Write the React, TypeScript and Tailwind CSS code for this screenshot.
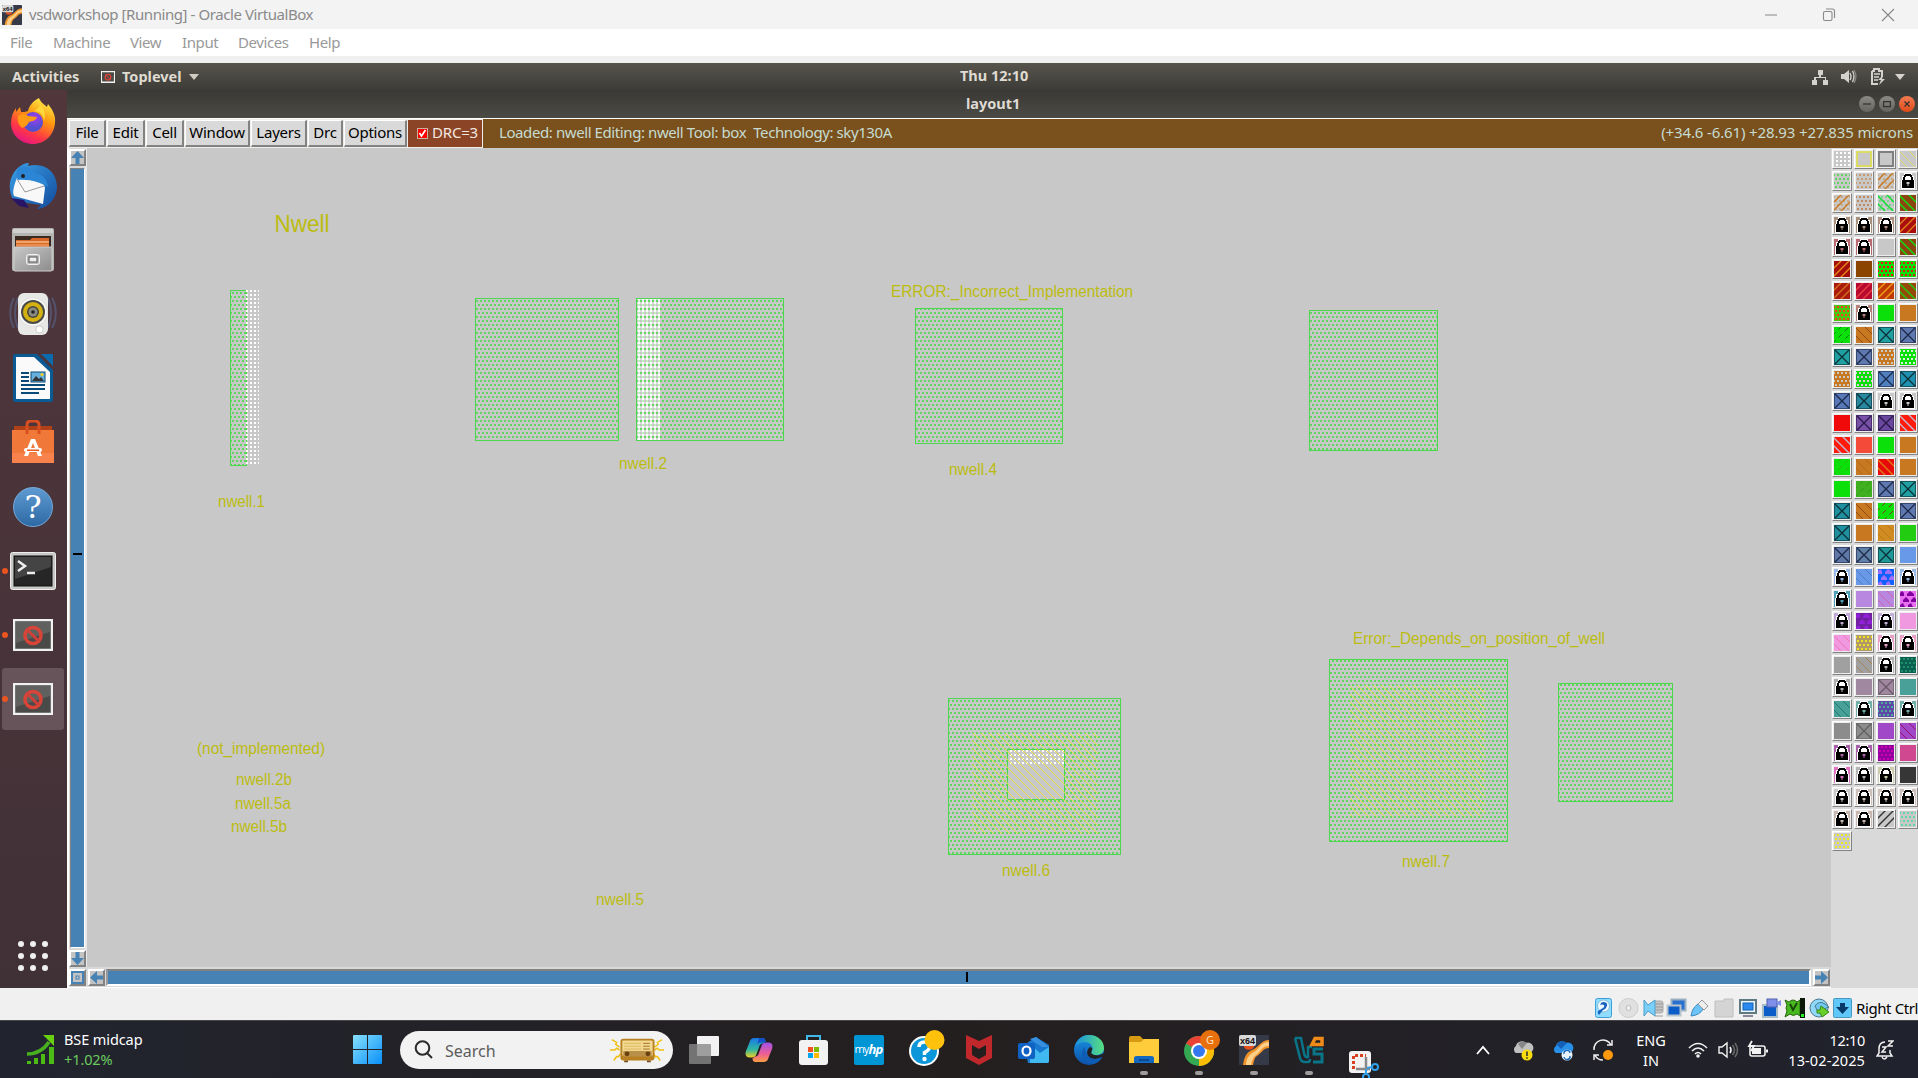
import type { ReactNode } from "react";

/* ---------- layer palette ---------- */

type Tile = [kind: string, bg: string, fg?: string];

const G = "#c8c8c8";
const GR = "#0be00b";
const OR = "#c87820";
const TE = "#20a0a0";
const BL = "#6078b0";

const TILES: Tile[] = [
  ["grid", G, "#ffffff"], ["box", G, "#dcdc64"], ["box", G, "#808080"], ["downthin", G, "#e4e060"],
  ["dots", G, "#5fd75f"], ["dots", G, "#c89a70"], ["updots", G, OR], ["lock", G],
  ["updots", G, OR], ["dots", G, "#c08a60"], ["downdots", G, "#0be030"], ["down", "#8b4510", "#10e010"],
  ["lock", "#a8907a"], ["lock", "#a8907a"], ["lock", "#b09080"], ["up", "#aa0d0d", "#e08018"],
  ["lock", "#b86a70"], ["lock", "#b86a70"], ["solid", G], ["down", "#8b4510", "#10e010"],
  ["up", "#a50d0d", "#e08a18"], ["solid", "#8b4500"], ["dots", GR, "#f01010"], ["dots", GR, "#d82010"],
  ["up", "#aa1a0d", "#d07020"], ["up", "#b80a30", "#e84040"], ["up", "#c03a08", "#f0a018"], ["down", "#964a0a", "#20c810"],
  ["dots", "#48c810", "#ff3820"], ["lock", "#b88078"], ["solid", GR], ["solid", OR],
  ["upthin", GR, "#0a7a10"], ["downthin", OR, "#8a4510"], ["cross", TE, "#0c3038"], ["cross", BL, "#1c2848"],
  ["cross", TE, "#0c3038"], ["cross", BL, "#1c2848"], ["dots", OR, G], ["dots", GR, "#d8ecd8"],
  ["dots", OR, G], ["dots", GR, "#e0c8d8"], ["cross", "#5080c0", "#1c2848"], ["cross", "#2090b0", "#0c3038"],
  ["cross", "#5878b8", "#1c2848"], ["cross", "#2888a0", "#0c3038"], ["lock", G], ["lock", G],
  ["solid", "#f00a0a"], ["cross", "#7850a8", "#281848"], ["cross", "#6a48a0", "#281848"], ["down", "#ff1a0a", "#c0b8d0"],
  ["down", "#ff1a0a", "#c0b8d0"], ["solid", "#f44a3a"], ["solid", GR], ["solid", OR],
  ["upthin", GR, "#30b010"], ["downthin", OR, "#b06818"], ["down", "#e80a0a", "#e07818"], ["solid", OR],
  ["solid", GR], ["upthin", "#40b020", "#309a18"], ["cross", BL, "#1c2848"], ["cross", TE, "#0c3038"],
  ["cross", "#2090a0", "#0c3038"], ["downthin", OR, "#8a4510"], ["upthin", GR, "#803010"], ["cross", BL, "#1c2848"],
  ["cross", "#2090a0", "#0c3038"], ["solid", OR], ["downthin", "#d08c20", "#b87818"], ["solid", "#22cc10"],
  ["cross", "#6078a8", "#1c2848"], ["cross", "#6080a8", "#1c2848"], ["cross", "#209898", "#0c3038"], ["solid", "#6898e8"],
  ["lock", "#98b8e8"], ["downthin", "#6898e8", "#5078b8"], ["tri", "#1060ff", "#a070f8"], ["lock", "#98b8e8"],
  ["lock", "#50a0b8"], ["solid", "#b888e0"], ["downthin", "#b888e0", "#d060a8"], ["tri", "#e870f0", "#8000a0"],
  ["lock", "#c0a8d8"], ["tri", "#7020a0", "#9020d8"], ["lock", "#c0b0d8"], ["solid", "#f098e0"],
  ["downthin", "#f098e0", "#f070b0"], ["dots", "#b09868", "#ece420"], ["lock", "#e8a0c8"], ["lock", "#e8a0c8"],
  ["solid", "#a0a0a0"], ["downthin", "#a0a0a0", "#a88050"], ["lock", "#b0b0b0"], ["dots", "#0a6050", "#209068"],
  ["lock", "#b0b0b0"], ["solid", "#a088a0"], ["cross", "#a088a0", "#685868"], ["solid", "#48a098"],
  ["downthin", "#48a098", "#187868"], ["lock", "#70b0a8"], ["dots", "#6048a8", "#48b098"], ["lock", "#70b0a8"],
  ["solid", "#8c8c8c"], ["cross", "#8c8c8c", "#606060"], ["solid", "#a048c8"], ["downthin", "#a048c8", "#980868"],
  ["lock", "#a860a8"], ["lock", "#a860a8"], ["dots", "#9000a0", "#d000b0"], ["solid", "#d04890"],
  ["lock", "#e070c0"], ["lock", "#b4b4b4"], ["lock", "#ccccac"], ["solid", "#363636"],
  ["lock", G], ["lock", "#ccc0b8"], ["lock", "#ccc0b8"], ["lock", "#ccc0b8"],
  ["lock", "#c8b8b0"], ["lock", "#c8b8b0"], ["up", G, "#303030"], ["dots", G, "#60d8a8"],
  ["dots", G, "#ecec20"],
];

const staggered = () => {
  let d = "";
  for (let r = 0; r < 4; r++)
    for (let c = 0; c < 5; c++) d += `M${c * 4 + (r % 2 ? 2 : 0) - 1} ${r * 4 + 1}h2v2h-2z`;
  return d;
};
const regular = () => {
  let d = "";
  for (let r = 0; r < 4; r++) for (let c = 0; c < 4; c++) d += `M${c * 4 + 2} ${r * 4 + 1}h2v2h-2z`;
  return d;
};
const DOTS = staggered();
const GRID = regular();
const UP = "M-2 9L9 -2M-2 17L17 -2M5 18L18 5";
const DOWN = "M7 -2L18 9M-2 -1L17 18M-2 7L9 18";

function TileArt({ kind, bg, fg }: { kind: string; bg: string; fg?: string }) {
  return (
    <svg width="16" height="16" viewBox="0 0 16 16" className="block">
      <rect width="16" height="16" fill={bg} />
      {(kind === "dots" || kind === "updots" || kind === "downdots") && (
        <path d={DOTS} fill={fg} opacity={kind === "dots" ? 1 : 0.4} />
      )}
      {kind === "grid" && <path d={GRID} fill={fg} />}
      {kind === "box" && <rect x="1" y="1" width="14" height="14" fill="none" stroke={fg} strokeWidth="2" />}
      {(kind === "up" || kind === "updots") && <path d={UP} stroke={fg} strokeWidth="1.4" />}
      {kind === "upthin" && <path d={UP} stroke={fg} strokeWidth="1" strokeDasharray="5 4" />}
      {(kind === "down" || kind === "downdots") && <path d={DOWN} stroke={fg} strokeWidth="1.4" />}
      {kind === "downthin" && <path d={DOWN} stroke={fg} strokeWidth=".9" />}
      {kind === "cross" && (
        <>
          <rect x=".5" y=".5" width="15" height="15" fill="none" stroke={fg} strokeOpacity=".6" />
          <path d="M1 1L15 15M15 1L1 15" stroke={fg} strokeWidth="1.3" />
        </>
      )}
      {kind === "tri" && (
        <path d="M0 2l2-2 2 2v3h-4zM7 3l3-3 4 3v2h-7zM3 9l3-3 3 3v2h-6zM11 9l3-3 2 2v3h-5zM0 14l3-2 2 4h-5zM8 14l3-2 2 4h-5z" fill={fg} />
      )}
      {kind === "lock" && (
        <>
          <path d="M4 0h8v3h2v4h1v9h-14v-9h1v-4h2z" fill="#fff" />
          <path d="M3 8V4h1V2h1V1h6v1h1v2h1v4h-2V4h-1V3H6v1H5v4z" fill="#000" />
          <rect x="2" y="7" width="12" height="8" fill="#000" />
          <path d="M6.500 9h3v2h-1v2h-1v-2h-1z" fill={bg} />
        </>
      )}
    </svg>
  );
}

function Palette() {
  return (
    <div className="w-[87px] shrink-0 overflow-hidden bg-[#d9d9d9] pl-px pt-px">
      <div className="grid w-[88px] grid-cols-4 gap-y-[2px]">
        {TILES.map(([kind, bg, fg], i) => (
          <div
            key={i}
            className="h-5 w-5 border border-b-[#828282] border-l-white border-r-[#828282] border-t-white bg-[#ececec] p-px"
          >
            <TileArt kind={kind} bg={bg} fg={fg} />
          </div>
        ))}
      </div>
    </div>
  );
}

/* ---------- layout drawing ---------- */

const WELLS: [number, number, number, number][] = [
  [230, 290, 247, 466],
  [475, 298, 619, 441],
  [636, 298, 784, 441],
  [915, 308, 1063, 444],
  [1309, 310, 1438, 451],
  [948, 698, 1121, 855],
  [1329, 659, 1508, 842],
  [1558, 683, 1673, 802],
];

const LABELS: [string, number, number, number][] = [
  ["nwell.1", 219, 265, 507],
  ["nwell.2", 620, 667, 469],
  ["nwell.4", 950, 997, 475],
  ["nwell.6", 1003, 1050, 876],
  ["nwell.7", 1403, 1450, 867],
  ["nwell.5", 597, 644, 905],
  ["nwell.2b", 237, 292, 785],
  ["nwell.5a", 236, 291, 809],
  ["nwell.5b", 232, 287, 832],
  ["(not_implemented)", 198, 325, 754],
  ["ERROR:_Incorrect_Implementation", 892, 1133, 297],
  ["Error:_Depends_on_position_of_well", 1354, 1605, 644],
];

function Canvas() {
  return (
    <svg width="1744" height="819" viewBox="87 148 1744 819" className="block bg-[#c8c8c8]">
      <defs>
        <pattern id="well" width="4" height="8" patternUnits="userSpaceOnUse">
          <path d="M2 0h2v2h-2zM0 4h2v2h-2z" fill="#5fd75f" />
        </pattern>
        <pattern id="err" width="4" height="4" patternUnits="userSpaceOnUse">
          <path d="M2 2h2v2h-2z" fill="#fff" />
        </pattern>
        <pattern id="dense" width="4" height="4" patternUnits="userSpaceOnUse">
          <path d="M2 2h2v2h-2z" fill="#fff" />
          <path d="M2 0h2v2h-2z" fill="#fff" opacity=".6" />
          <path d="M0 2h2v2h-2z" fill="#fff" opacity=".3" />
        </pattern>
        <pattern id="diag" width="8" height="8" patternUnits="userSpaceOnUse">
          <path d="M-1 -1L9 9" stroke="#e6df48" strokeWidth="1" />
        </pattern>
      </defs>
      <g shapeRendering="crispEdges">
        {WELLS.map(([x1, y1, x2, y2]) => (
          <rect
            key={`${x1}`}
            x={x1 + 0.5}
            y={y1 + 0.5}
            width={x2 - x1 - 1}
            height={y2 - y1 - 1}
            fill="url(#well)"
            stroke="#4cd84c"
          />
        ))}
        <rect x="246" y="290" width="13" height="175" fill="url(#err)" />
        <rect x="637" y="299" width="23" height="141" fill="url(#dense)" />
        <rect x="1007.5" y="749.5" width="57" height="50" fill="#c8c8c8" stroke="#4cd84c" />
        <rect x="1010" y="750" width="54" height="14" fill="url(#err)" />
      </g>
      <rect x="972" y="733" width="126" height="101" fill="url(#diag)" />
      <rect x="1350" y="685" width="135" height="132" fill="url(#diag)" />
      <g fill="#bcbc10" fontFamily="'Liberation Sans', Arial, sans-serif" fontSize="16">
        <text x="274.500" y="232" fontSize="23.5" textLength="55" lengthAdjust="spacingAndGlyphs">
          Nwell
        </text>
        {LABELS.map(([t, x1, x2, y]) => (
          <text key={t} x={x1 - 1} y={y} textLength={x2 - x1 + 1} lengthAdjust="spacingAndGlyphs">
            {t}
          </text>
        ))}
      </g>
    </svg>
  );
}

/* ---------- scroll bars ---------- */

const ROT: Record<string, string> = { up: "", down: "rotate-180", left: "-rotate-90", right: "rotate-90" };

function ArrowButton({ dir }: { dir: string }) {
  return (
    <div className="h-[17px] w-[17px] shrink-0 border-2 border-b-[#828282] border-l-white border-r-[#828282] border-t-white bg-[#c3c3c3]">
      {dir === "zoom" ? (
        <svg width="13" height="13" viewBox="0 0 13 13" className="block">
          <path d="M1 1h11v11h-11z" fill="none" stroke="#4682b4" strokeWidth="2" />
          <rect x="5" y="5" width="3" height="3" fill="none" stroke="#4682b4" />
        </svg>
      ) : (
        <svg width="13" height="13" viewBox="0 0 13 13" className={`block ${ROT[dir]}`}>
          <path d="M6.500 0L13 7H8.500V13H4.500V7H0z" fill="#4682b4" />
        </svg>
      )}
    </div>
  );
}

/* ---------- dock ---------- */

function Firefox({ s = 46 }: { s?: number }) {
  return (
    <svg width={s} height={s} viewBox="0 0 46 46">
      <defs>
        <linearGradient id="ff" x1=".8" y1="0" x2=".3" y2="1">
          <stop offset="0" stopColor="#fff44f" />
          <stop offset=".4" stopColor="#ff980e" />
          <stop offset=".75" stopColor="#ff3647" />
          <stop offset="1" stopColor="#e31587" />
        </linearGradient>
        <radialGradient id="ffp" cx=".6" cy=".3">
          <stop offset="0" stopColor="#a53cf0" />
          <stop offset="1" stopColor="#5050d0" />
        </radialGradient>
      </defs>
      <path d="M29 0c2 5 5 6 8 9l1-3c4 5 8 11 7 19-1 12-10 21-22 21S1 37 1 25c0-6 2-11 5-15v4l4-5 1 5c2 0 5 0 7-1 1-5 5-10 11-13z" fill="url(#ff)" />
      <circle cx="23" cy="24" r="10" fill="url(#ffp)" />
      <path d="M8 18c4-3 8-2 10 0l9 1c-1 4-5 4-8 5-1 3-4 5-7 6-3-3-5-7-4-12z" fill="#ff9a16" />
      <path d="M24 13c6 0 10 4 10 10 2-6 1-12-4-16-1 3-3 4-6 6z" fill="#ffd83c" />
    </svg>
  );
}

function Thunderbird() {
  return (
    <svg width="48" height="48" viewBox="0 0 48 48">
      <defs>
        <linearGradient id="tb" x1="0" y1="0" x2="1" y2="1">
          <stop offset="0" stopColor="#3aa0e8" />
          <stop offset="1" stopColor="#124a9c" />
        </linearGradient>
      </defs>
      <path d="M10 5c5-4 8-4 10-4l-1 3c16-4 28 5 29 20 0 12-8 22-20 23l4-4-14-2L4 38C-1 28-1 14 10 5z" fill="url(#tb)" />
      <path d="M2 36l8 8 10 2-5-8z" fill="#2a1466" />
      <path d="M8 16l26 4 2 6-2 16L5 34c-2-4 0-11 3-18z" fill="#f8f8f8" />
      <path d="M8 17l8 13 19-6" fill="none" stroke="#999" />
      <path d="M10 5c8-1 12 2 16 6 8 2 12 6 13 14-8-4-16-8-30-7-2-4-2-9 1-13z" fill="#2b87d6" />
      <circle cx="14" cy="14" r="2" fill="#222" />
    </svg>
  );
}

function Files() {
  return (
    <svg width="42" height="44" viewBox="0 0 42 44">
      <defs>
        <linearGradient id="fl" x1="0" y1="0" x2="1" y2="1">
          <stop offset="0" stopColor="#c8c8c8" />
          <stop offset="1" stopColor="#8c8c8c" />
        </linearGradient>
      </defs>
      <rect width="42" height="43" rx="2" fill="#b4b4b2" />
      <rect x="1" y="1" width="40" height="4" fill="#d0d0ce" />
      <rect x="3" y="8" width="36" height="12" fill="#3a2a20" />
      <path d="M4 12h14l2-2h17v9H4z" fill="#d86828" />
      <path d="M4 14h33" stroke="#ffe0b0" />
      <path d="M4 17h33" stroke="#f8b070" />
      <rect x="2" y="19" width="38" height="24" rx="1" fill="url(#fl)" stroke="#cfcfcf" />
      <rect x="14.500" y="26.500" width="13" height="10" rx="2" fill="#bbb" stroke="#f2f2f2" />
      <rect x="17" y="29" width="8" height="5" fill="#eee" stroke="#555" />
    </svg>
  );
}

function Rhythmbox() {
  return (
    <svg width="48" height="44" viewBox="0 0 48 44">
      <path d="M5 6c-5 9-5 21 0 30M9 6c-4 9-4 21 0 30M43 6c5 9 5 21 0 30M39 6c4 9 4 21 0 30" fill="none" stroke="#5a6c98" strokeWidth="2" opacity=".55" />
      <rect x="9" y="1" width="30" height="42" rx="6" fill="#e8e8e6" />
      <circle cx="24" cy="20" r="14.500" fill="#f6f6f4" stroke="#ccc" strokeWidth=".5" />
      <circle cx="24" cy="20" r="12" fill="#4a4a48" />
      <circle cx="24" cy="20" r="10" fill="#d4b010" />
      <circle cx="24" cy="20" r="6" fill="#48463c" />
      <circle cx="24" cy="20" r="4.500" fill="#8a8a80" />
      <circle cx="24" cy="20" r="1.800" fill="#222" />
      <rect x="27" y="34" width="7" height="7" rx="3" fill="#fff" stroke="#ccc" />
    </svg>
  );
}

function Writer() {
  return (
    <svg width="40" height="48" viewBox="0 0 40 48">
      <path d="M2 0h22l16 16v30a2 2 0 0 1-2 2H2a2 2 0 0 1-2-2V2a2 2 0 0 1 2-2z" fill="#0a5a94" />
      <path d="M3 3h18l16 15v27H3z" fill="#fafafa" />
      <path d="M28 0h12v12z" fill="#0a6cae" />
      <path d="M8 19h8M8 23h8M8 27h8M8 31h24M8 35h24M8 39h18" stroke="#0a4a78" strokeWidth="1.800" />
      <rect x="18" y="18" width="14" height="10" fill="#68b0dc" stroke="#0a4a78" />
      <path d="M19 27l4-5 3 3 2-2 3 4z" fill="#333" />
      <circle cx="29" cy="20.500" r="1.500" fill="#f0d020" />
    </svg>
  );
}

function Software() {
  return (
    <svg width="42" height="44" viewBox="0 0 42 44">
      <path d="M2 6h38v5H2z" fill="#b04018" />
      <path d="M0 10h42v33H0z" fill="#f07838" />
      <path d="M0 33h42v10H0z" fill="#f8824c" />
      <path d="M15 14V5q0-4 4-4h4q4 0 4 4v9" fill="none" stroke="#d85020" strokeWidth="3" />
      <path d="M12 36l7-17h4l7 17h-4l-5-13-5 13z" fill="#fff" />
      <rect x="12" y="28" width="18" height="4" rx="2" fill="#fff" />
      <rect x="15" y="29.500" width="12" height="1.500" fill="#e85a20" />
    </svg>
  );
}

function HelpIcon() {
  return (
    <div className="flex h-10 w-10 items-center justify-center rounded-full border border-[#78a8d8] bg-linear-to-b from-[#5f9bd2] to-[#2d69a4] font-['DejaVu_Serif',serif] text-[32px] leading-none text-white">
      ?
    </div>
  );
}

function Terminal() {
  return (
    <svg width="46" height="38" viewBox="0 0 46 38">
      <rect x=".5" y=".5" width="45" height="37" rx="2" fill="#c8c8c6" stroke="#eee" />
      <rect x="4" y="4" width="38" height="30" fill="#262626" stroke="#111" />
      <path d="M5 5h36v10L5 27z" fill="#444" />
      <path d="M8 9l7 5-7 5" fill="none" stroke="#eee" strokeWidth="2.500" />
      <path d="M17 21h8" stroke="#eee" strokeWidth="2.500" />
    </svg>
  );
}

function NoApp({ w = 40, h = 32 }: { w?: number; h?: number }) {
  return (
    <svg width={w} height={h} viewBox="0 0 40 32">
      <rect x="1" y="1" width="38" height="30" fill="#4a4a48" stroke="#f0f0f0" strokeWidth={w < 20 ? 4.5 : 2.5} />
      <path d="M3 3h34v10L3 24z" fill={w < 20 ? "#4a4a48" : "#60605e"} />
      <circle cx="20" cy="16.500" r="8" fill="none" stroke="#d84438" strokeWidth="3.500" />
      <path d="M14.500 11l11 11" stroke="#d04038" strokeWidth="3" />
    </svg>
  );
}

function DockItem({ children, running, active }: { children: ReactNode; running?: boolean; active?: boolean }) {
  return (
    <div className="relative flex h-16 w-[66px] items-center justify-center">
      <div className={active ? "flex h-[62px] w-[62px] items-center justify-center rounded-[3px] bg-[#67545a]" : "flex"}>
        {children}
      </div>
      {running && <span className="absolute left-[2px] top-[29px] h-[6px] w-[6px] rounded-full bg-[#e95420]" />}
    </div>
  );
}

function Dock() {
  return (
    <div className="flex h-[898px] w-[67px] shrink-0 flex-col bg-linear-to-b from-[#51363c] via-[#49343a] to-[#403136]">
      <DockItem><div className="-mt-[2px]"><Firefox /></div></DockItem>
      <DockItem><Thunderbird /></DockItem>
      <DockItem><Files /></DockItem>
      <DockItem><Rhythmbox /></DockItem>
      <DockItem><Writer /></DockItem>
      <div className="mb-px"><DockItem><Software /></DockItem></div>
      <DockItem><HelpIcon /></DockItem>
      <DockItem running><Terminal /></DockItem>
      <DockItem running><NoApp /></DockItem>
      <DockItem running active><NoApp /></DockItem>
      <div className="mr-px mt-auto grid grid-cols-3 gap-[6px] self-center pb-[17px]">
        {Array.from({ length: 9 }, (_, i) => (
          <span key={i} className="h-[6px] w-[6px] rounded-full bg-[#f0f0f0]" />
        ))}
      </div>
    </div>
  );
}

/* ---------- host window ---------- */

function VBoxLogo({ s }: { s: number }) {
  return (
    <svg width={s} height={s} viewBox="0 0 30 30">
      <rect width="30" height="30" rx="1" fill="#363a48" />
      <path d="M30 5v8c-6 0-6 4-12 8-3 2-3 6-4 9H4c1-8 4-13 9-15 6-2 9-10 17-10z" fill="#f0922a" />
      <path d="M30 7v4c-8 0-8 6-13 9-3 2-4 6-5 10H7c0-7 4-11 8-13 5-3 7-10 15-10z" fill="#fbd08a" />
      <path d="M5 11h10c0 5-10 5-10 0z" fill="#e8501a" />
      <rect width="17" height="11" rx="2" fill="#d8d8d8" />
      <text x="1" y="9" fontSize="9" fontWeight="bold" fontFamily="'Liberation Sans', sans-serif" textLength="15" lengthAdjust="spacingAndGlyphs" fill="#111">x64</text>
    </svg>
  );
}

function HostTitle() {
  return (
    <>
      <div className="flex h-[29px] items-center bg-[#f3f3f3] pl-[2px]">
        <VBoxLogo s={20} />
        <span className="ml-[7px] text-[15px] tracking-[-0.43px] text-[#8a8a8a]">vsdworkshop [Running] - Oracle VirtualBox</span>
        <svg width="130" height="14" viewBox="0 0 130 14" className="ml-auto mr-[23px]" fill="none" stroke="#888" strokeWidth="1.100">
          <path d="M0 7h12M117 1l12 12M129 1L117 13" />
          <rect x="58.500" y="3.500" width="8.500" height="9" rx="1.500" />
          <path d="M61 1h6.500q2 0 2 2v7" />
        </svg>
      </div>
      <div className="flex h-[27px] items-center bg-white pl-[10px] text-[15px] tracking-[-0.4px] text-[#999]">
        <span className="w-[43px]">File</span>
        <span className="w-[77px]">Machine</span>
        <span className="w-[52px]">View</span>
        <span className="w-[56px]">Input</span>
        <span className="w-[71px]">Devices</span>
        <span>Help</span>
      </div>
      <div className="h-[7px] bg-[#f0f0f0]" />
    </>
  );
}

function GnomePanel() {
  return (
    <div className="relative flex h-[27px] items-center bg-linear-to-b from-[#57544c] to-[#3d3c38] pl-3 text-[14.500px] font-bold text-[#dfdbd2]">
      <span className="w-[89px]">Activities</span>
      <NoApp w={14} h={12} />
      <span className="ml-[7px]">Toplevel</span>
      <svg width="10" height="6" className="ml-[7px]"><path d="M0 0h10L5 6z" fill="#d0ccc4" /></svg>
      <span className="absolute left-[960px] top-[2px]">Thu 12:10</span>
      <svg width="94" height="18" viewBox="0 0 94 18" className="ml-auto mr-[12px]" fill="#d4d2cc">
        <path d="M6 2h5v5h-2v2h5v3h2v5h-5v-5h2v-2H4v2h1v5H0v-5h2V9h5V7H6z" />
        <path d="M29 6h3l5-4v13l-5-4h-3z" />
        <path d="M38 5q2 4 0 7M40.500 3q3 5 0 11" fill="none" stroke="#d4d2cc" strokeWidth="1.400" />
        <path d="M42 2q4 6 0 13" fill="none" stroke="#8a8882" strokeWidth="1.200" />
        <path d="M60 3h2V1h5v2h3v6M66 16h-6V3" fill="none" stroke="#d4d2cc" strokeWidth="2" />
        <path d="M62 6h6M62 9h5M62 12h4" stroke="#d4d2cc" strokeWidth="1.500" />
        <path d="M71 7l-5 5h3l-2 5 6-6h-3z" />
        <path d="M83 6h10l-5 6z" />
      </svg>
    </div>
  );
}

const MENU: [string, string][] = [
  ["File", "w-[37px]"],
  ["Edit", "w-[38px]"],
  ["Cell", "w-[38px]"],
  ["Window", "w-[65px]"],
  ["Layers", "w-[56px]"],
  ["Drc", "w-[35px]"],
  ["Options", "w-[63px]"],
];

function Ring({ close, children }: { close?: boolean; children: ReactNode }) {
  return (
    <span className={close ? "flex h-4 w-4 items-center justify-center rounded-full bg-linear-to-b from-[#f37a50] to-[#df4a16]" : "flex h-4 w-4 items-center justify-center rounded-full bg-linear-to-b from-[#8c8a84] to-[#66645e]"}>
      <svg width="8" height="8" viewBox="0 0 8 8" fill="none" stroke="#33322e" strokeWidth="1.200">{children}</svg>
    </span>
  );
}

function MagicWindow() {
  return (
    <div className="flex w-[1851px] flex-col">
      <div className="relative flex h-7 items-center justify-end gap-1 bg-linear-to-b from-[#3a3935] to-[#4c4a45] pr-[3px]">
        <span className="absolute left-[899px] top-[3px] text-[14.500px] font-bold text-[#dfdbd2]">layout1</span>
        <Ring><path d="M0 4h8" /></Ring>
        <Ring><path d="M.6 1.600h6.800v5H.6z" /></Ring>
        <Ring close><path d="M1.500 1.500l5 5M6.500 1.500l-5 5" /></Ring>
      </div>
      <div className="flex h-[30px] gap-px border-t border-white bg-[#f0ece8] text-[15px]">
        <div className="flex gap-px py-px pl-[2px]">
          {MENU.map(([label, w]) => (
            <div key={label} className={`${w} flex items-center justify-center border-b-2 border-r-2 border-b-[#828282] border-r-[#828282] border-l border-t border-l-white border-t-white bg-[#d9d9d9] pb-px tracking-[-0.25px] text-black`}>
              {label}
            </div>
          ))}
        </div>
        <div className="my-px flex w-[74px] items-center bg-[#8b4526] pb-[2px] pl-[9px] tracking-[-0.2px] text-[#f4e8e0]">
          <svg width="11" height="11" viewBox="0 0 11 11" className="mr-[4px] mt-px shrink-0">
            <rect x=".5" y=".5" width="10" height="10" fill="#ff0000" stroke="#c8b0a0" />
            <path d="M2.500 5l2 3 4-6" fill="none" stroke="#fff" strokeWidth="1.600" />
          </svg>
          DRC=3
        </div>
        <div className="flex flex-1 items-center justify-between whitespace-pre bg-[#7a501c] pb-[2px] pl-[16px] pr-[5px] text-[#c6dcd2]">
          <span className="tracking-[-0.41px]">{"Loaded: nwell Editing: nwell Tool: box  Technology: sky130A"}</span>
          <span className="tracking-[-0.13px]">(+34.6 -6.61) +28.93 +27.835 microns</span>
        </div>
      </div>
      <div className="flex h-[840px]">
        <div className="flex w-[1764px] flex-col">
          <div className="flex h-[819px]">
            <div className="flex w-5 flex-col items-center gap-[2px] border-x-2 border-l-white border-r-[#e8e8e8] bg-[#d9d9d9] pt-px">
              <ArrowButton dir="up" />
              <div className="flex w-[15px] flex-1 items-center justify-center border border-b-white border-l-[#828282] border-r-white border-t-[#828282] bg-[#4682b4]">
                <span className="mb-[9px] h-[2px] w-[9px] bg-black" />
              </div>
              <ArrowButton dir="down" />
            </div>
            <Canvas />
          </div>
          <div className="flex h-[21px] items-center gap-px border-b border-l-2 border-white bg-[#d9d9d9]">
            <ArrowButton dir="zoom" />
            <div className="pl-px"><ArrowButton dir="left" /></div>
            <div className="flex h-[17px] flex-1 items-center justify-center border-2 border-b-white border-l-[#999] border-r-white border-t-[#828282] bg-[#4682b4]">
              <span className="mr-[-16px] h-[10px] w-[2px] bg-black" />
            </div>
            <div className="px-px"><ArrowButton dir="right" /></div>
          </div>
        </div>
        <Palette />
      </div>
    </div>
  );
}

/* ---------- virtual machine status icons ---------- */

function StatusIcons() {
  const f = "#8fdcff";
  const s = "#4a7890";
  return (
    <svg width="260" height="20" viewBox="0 0 260 20">
      <rect x="1.500" y=".5" width="16" height="19" rx="2" fill={f} stroke="#3aa0dc" />
      <circle cx="9.500" cy="8" r="6" fill="#eefaff" stroke="#8abcd8" />
      <path d="M9 4q5 0 4 4-1 3-4 4l-4 5q-2-2-1-4l5-3q2-1 1-3-2-1-4 0 1-3 3-3z" fill="#1a62c0" />
      <circle cx="34.500" cy="10" r="9.500" fill="#e0e0e0" stroke="#ccc" />
      <circle cx="34.500" cy="10" r="2.500" fill="#eee" stroke="#bbb" />
      <rect x="60" y="3" width="9" height="12" rx="2" fill="#c4c4c4" stroke="#aaa" />
      <path d="M62 6h7M62 9h7M62 12h7M61 18h8" stroke="#999" />
      <path d="M50 2l4 5 7-5v16l-7-5-4 5z" fill="#7ad0fa" stroke="#4a9cc8" />
      <rect x="77.500" y="1.500" width="14" height="11" fill="#2a70d0" stroke="#9ab0c0" strokeWidth="2" />
      <rect x="73.500" y="7.500" width="13" height="10" fill="#0a5cc8" stroke="#b8c4cc" strokeWidth="2" />
      <path d="M97 18q1-8 7-12l5 5q-3 6-12 7z" fill="#6cc4f8" stroke="#3a88c0" />
      <path d="M104 6l4-4 6 6-4 4z" fill="#eee" stroke="#999" />
      <path d="M121 3h9V1h9v18h-18z" fill="#d4d4d4" stroke="#c0c0c0" />
      <rect x="146" y="2" width="16" height="13" fill="#e8f6fc" stroke="#607880" strokeWidth="2" />
      <rect x="149" y="5" width="10" height="7" fill="#2a8af0" stroke="#1060b0" />
      <path d="M149 18h10" stroke="#889" strokeWidth="2" />
      <rect x="169" y="7" width="14" height="12" fill="#0a5cc8" stroke="#a8bcc8" strokeWidth="2" />
      <rect x="173" y="1" width="10" height="8" fill="#8090e8" stroke="#5060b0" />
      <path d="M183 4l4-2v6l-4-2z" fill="#8090e8" />
      <path d="M191 2l4 2q4-4 8 0l3-2v16l-3-2q-4 3-7 0l-5 3 2-6q-2-3 0-6z" fill="#48b820" stroke="#286810" />
      <path d="M196 6l3 6 4-7" stroke="#184808" fill="none" strokeWidth="2" />
      <rect x="206" y="0" width="5" height="20" fill="#0a1808" />
      <rect x="207" y="16" width="3" height="3" fill="#20f020" />
      <circle cx="225" cy="10" r="9" fill="#90d8f8" stroke={s} />
      <path d="M221 8q4-6 10-2l4 3q-6 1-6 8l-5-3z" fill="#70c8f0" stroke={s} />
      <path d="M227 8l8 6-7 5-2-4h-3v-3h3z" fill="#68d028" stroke="#388818" />
      <rect x="239.500" y=".5" width="18" height="19" rx="1" fill="#60c8f8" stroke="#4898c0" />
      <path d="M246 5h5v4h4l-6.500 7L242 9h4z" fill="#083868" />
    </svg>
  );
}

/* ---------- windows task bar ---------- */

function AppSlot({ children, running, low }: { children: ReactNode; running?: boolean; low?: boolean }) {
  return (
    <div className="relative flex h-[58px] w-[55px] shrink-0 items-center justify-center">
      <div className={low ? "relative top-[15px]" : ""}>{children}</div>
      {running && <span className="absolute bottom-[4px] h-[4px] w-[8px] rounded-full bg-[#a09c9c]" />}
    </div>
  );
}

function TaskApps() {
  return (
    <>
      <AppSlot>
        <svg width="30" height="28" viewBox="0 0 30 28"><rect x="8" width="22" height="20" rx="1" fill="#f2f2f2" /><rect y="8" width="22" height="20" rx="1" fill="#888" opacity=".8" /></svg>
      </AppSlot>
      <AppSlot>
        <svg width="28" height="26" viewBox="0 0 30 28">
          <defs>
            <linearGradient id="cpa" x1="0" y1="0" x2="0" y2="1"><stop offset="0" stopColor="#1878e8" /><stop offset=".6" stopColor="#30b8a0" /><stop offset="1" stopColor="#f0d020" /></linearGradient>
            <linearGradient id="cpb" x1="0" y1="0" x2="0" y2="1"><stop offset="0" stopColor="#a050e8" /><stop offset=".6" stopColor="#f06090" /><stop offset="1" stopColor="#f8a040" /></linearGradient>
          </defs>
          <path d="M10 1h9q3 0 3 4l-3 2q-3 0-4 4l-3 8q-1 3-5 3H5q-6 0-4-7l4-10q1-4 5-4z" fill="url(#cpa)" />
          <path d="M20 27h-9q-3 0-3-4l3-2q3 0 4-4l3-8q1-3 5-3h2q6 0 4 7l-4 10q-1 4-5 4z" fill="url(#cpb)" />
          <path d="M15 1h4q3 0 3 5h-6q-2 0-3 2z" fill="#1450c8" />
        </svg>
      </AppSlot>
      <AppSlot>
        <svg width="30" height="30" viewBox="0 0 30 30">
          <path d="M8 7V1h13v6" fill="none" stroke="#40b8e8" strokeWidth="2" />
          <rect x="0" y="5" width="29" height="25" rx="3" fill="#f2f2f2" />
          <path d="M9 12h5v5H9z" fill="#f25022" /><path d="M15 12h5v5h-5z" fill="#7fba00" /><path d="M9 18h5v5H9z" fill="#00a4ef" /><path d="M15 18h5v5h-5z" fill="#ffb900" />
        </svg>
      </AppSlot>
      <AppSlot>
        <div className="flex h-[30px] w-[30px] items-center justify-center rounded-[2px] bg-[#0096d6] font-['Open_Sans',sans-serif] text-[11px] tracking-[-0.8px] text-white">
          my<b className="text-[13px] italic">hp</b>
        </div>
      </AppSlot>
      <AppSlot>
        <svg width="36" height="36" viewBox="0 0 36 36" className="ml-[6px] mt-[-4px]">
          <circle cx="15" cy="21" r="14" fill="#0a96d8" stroke="#fff" strokeWidth="2" />
          <path d="M10 17q0-5 5.500-5t5 5q0 3-5 5.500v2.500" fill="none" stroke="#fff" strokeWidth="3.500" />
          <circle cx="15.500" cy="29" r="2.200" fill="#fff" />
          <circle cx="25.500" cy="10" r="10" fill="#ffc20c" />
        </svg>
      </AppSlot>
      <AppSlot>
        <svg width="28" height="30" viewBox="0 0 28 30"><path d="M1 0l13 6 13-6v23l-13 7-13-7zM7 10v10l7 4 7-4V10l-7 4z" fill="#c0282c" fillRule="evenodd" /></svg>
      </AppSlot>
      <AppSlot>
        <svg width="32" height="28" viewBox="0 0 32 28">
          <path d="M6 9l12-8 13 8v16q0 2-2 2H10z" fill="#1878d0" />
          <path d="M12 8l10 9 9-6v14q0 2-2 2H12z" fill="#40b8f0" />
          <path d="M12 3l12 8 7 0-13-10z" fill="#3890e0" />
          <rect y="7" width="17" height="16" rx="2" fill="#0f62c4" />
          <ellipse cx="8.500" cy="15" rx="4" ry="4.500" fill="none" stroke="#fff" strokeWidth="2.200" />
        </svg>
      </AppSlot>
      <AppSlot>
        <svg width="30" height="30" viewBox="0 0 30 30">
          <defs>
            <linearGradient id="eda" x1="0" y1="0" x2="1" y2="0"><stop offset="0" stopColor="#1890e0" /><stop offset="1" stopColor="#58e080" /></linearGradient>
            <linearGradient id="edb" x1="0" y1="0" x2="0" y2="1"><stop offset="0" stopColor="#1a94e4" /><stop offset="1" stopColor="#0c50a8" /></linearGradient>
          </defs>
          <circle cx="15" cy="15" r="15" fill="url(#edb)" />
          <path d="M1 12C3 4 9 0 15 0c9 0 15 6 15 13 0 5-4 7-8 7-5 0-6-2-4-4 2-5-2-9-7-9-4 0-8 2-10 5z" fill="url(#eda)" />
          <path d="M16 12c-4 3-5 11 5 12 3 0 5-1 7-2l3 3-1-7c-4 3-9 3-12 1-2-2 1-4 0-6z" fill="#242021" />
          <path d="M11 12c-6 5-3 17 8 17 4-1 7-3 9-7-6 3-14 3-16-3-1-3-1-5-1-7z" fill="#0e5cb4" />
        </svg>
      </AppSlot>
      <AppSlot running>
        <svg width="30" height="27" viewBox="0 0 30 27">
          <path d="M0 2q0-2 2-2h9l3 3h14v6H0z" fill="#d89a10" /><path d="M0 6h12l3-3h15v24H0z" fill="#ffcc3c" />
          <path d="M5 27v-5q0-2 3-2h14q3 0 3 2v5z" fill="#1468c0" /><path d="M10 24h10" stroke="#0a4890" strokeWidth="2" />
        </svg>
      </AppSlot>
      <AppSlot running>
        <svg width="36" height="36" viewBox="0 0 36 36" className="ml-[6px] mt-[-4px]">
          <circle cx="15" cy="21" r="15" fill="#34a853" />
          <path d="M15 21L2 13.500A15 15 0 0 1 28 13.500z" fill="#ea4335" />
          <path d="M15 21l13-7.500A15 15 0 0 1 15 36z" fill="#fbbc04" />
          <circle cx="15" cy="21" r="8" fill="#fff" /><circle cx="15" cy="21" r="6" fill="#3478f0" />
          <circle cx="26" cy="10" r="10" fill="#e8700c" />
          <text x="26" y="14" fontSize="11" textAnchor="middle" fill="#fce0c0" fontFamily="'Noto Sans', sans-serif">G</text>
        </svg>
      </AppSlot>
      <AppSlot running><VBoxLogo s={30} /></AppSlot>
      <AppSlot running>
        <svg width="30" height="28" viewBox="0 0 30 28" fill="none">
          <path d="M1 2h6l3 15q1 5 4 4V11h4" stroke="#0a7488" strokeWidth="2.500" />
          <path d="M1 2l5 20q1 4 5 4h3q2 0 2-3" stroke="#0a7488" strokeWidth="2.500" />
          <path d="M29 13h-9v5h8v8h-9" stroke="#0a7488" strokeWidth="3" />
          <path d="M18 8.500l3-6h7v6z" stroke="#f08a18" strokeWidth="3.500" />
        </svg>
      </AppSlot>
      <AppSlot low>
        <svg width="30" height="28" viewBox="0 0 30 28">
          <rect width="22" height="22" rx="3" fill="#f2f2f2" />
          <path d="M4.500 18V4.500H17" fill="none" stroke="#d84020" strokeWidth="3" strokeDasharray="3 2" />
          <path d="M7 18h14M17 6v14" stroke="#888" strokeWidth="2.500" />
          <circle cx="26" cy="16" r="3" fill="none" stroke="#30a0e8" strokeWidth="2" /><circle cx="17" cy="26" r="3" fill="none" stroke="#30a0e8" strokeWidth="2" />
          <path d="M18 17l5-1M17 18v5" stroke="#30a0e8" strokeWidth="2" />
        </svg>
      </AppSlot>
    </>
  );
}

function Tray() {
  return (
    <div className="ml-auto flex h-full items-center pr-[24px] text-white">
      <svg width="150" height="26" viewBox="0 0 150 26" fill="none">
        <path d="M1 17l6-7 6 7" stroke="#fff" strokeWidth="1.800" />
        <path d="M40 16a4 4 0 0 1 0-7 6 6 0 0 1 10-3 5 5 0 0 1 4 10z" fill="#c0c0c0" />
        <path d="M42 7a6 6 0 0 1 9-1l-5 6z" fill="#888" />
        <circle cx="51" cy="18" r="5.500" fill="#f8dc10" /><path d="M51 14.500v4.500M51 20.200v1.600" stroke="#333" strokeWidth="1.600" />
        <path d="M80 16a4 4 0 0 1 0-7 6 6 0 0 1 10-3 5 5 0 0 1 4 10z" fill="#2890e8" />
        <path d="M81 8a6 6 0 0 1 10-2l-6 6z" fill="#1460b8" />
        <circle cx="91" cy="18" r="5.500" fill="#e8f2fa" /><path d="M88 17a3 3 0 0 1 6-1M94 19a3 3 0 0 1-6 1" stroke="#1868b8" strokeWidth="1.300" />
        <path d="M118 13a9 9 0 0 1 17-5M136 3v5h-5M118 23v-5h5M119 18q2 5 8 5" stroke="#eee" strokeWidth="1.500" />
        <circle cx="132" cy="18" r="5" fill="#ff980c" />
      </svg>
      <div className="ml-[5px] w-[40px] text-center text-[14.500px] leading-5">
        <div>ENG</div>
        <div>IN</div>
      </div>
      <svg width="84" height="22" viewBox="0 0 84 22" fill="none" stroke="#f2f2f2" strokeWidth="1.600" className="ml-[17px]">
        <path d="M1 9q9-9 18 0M4 12q6-6 12 0M7 15q3-3 6 0" /><circle cx="10" cy="17" r="1" fill="#fff" />
        <path d="M31 8h3l5-4v14l-5-4h-3z" strokeWidth="1.400" /><path d="M42 8q2 3 0 6" /><path d="M44.500 6q4 5 0 10M47 4q5 7 0 14" stroke="#666" />
        <rect x="62" y="7" width="15" height="10" rx="2" /><path d="M79 10.500v3" strokeWidth="2" />
        <path d="M64 9h9v6h-9z" fill="#f2f2f2" stroke="none" /><path d="M64 2l-3 5h5l-3 5" strokeWidth="1.800" />
      </svg>
      <div className="ml-[8px] w-[85px] text-right text-[14.500px] leading-5">
        <div className="tracking-[-0.3px]">12:10</div>
        <div className="tracking-[0.1px]">13-02-2025</div>
      </div>
      <svg width="18" height="20" viewBox="0 0 18 20" fill="none" stroke="#f2f2f2" strokeWidth="1.500" className="ml-[11px]">
        <path d="M9 2q-6 0-6 7v4l-2 3h15l-2-3v-3M6 17q2 4 5 0" /><path d="M6 7h4l-4 5h4M12 1h5l-5 5h5" />
      </svg>
    </div>
  );
}

function Taskbar() {
  return (
    <div className="flex h-[58px] items-center border-t border-[#484648] bg-linear-to-r from-[#21242f] via-[#241f1f] to-[#20222d]">
      <svg width="28" height="29" viewBox="0 0 28 29" className="ml-[26px]">
        <path d="M1 19q14 0 22-12" stroke="#48b020" strokeWidth="3.500" fill="none" />
        <path d="M17 0h11v11z" fill="#68d010" />
        <path d="M1 26h4v3H1zM8 23h4v6H8zM15 19h4v10h-4zM23 12h5v17h-5z" fill="#4cbc14" />
      </svg>
      <div className="ml-[10px] mt-[-1px] w-[289px] text-[14.500px] leading-5 tracking-[-0.1px]">
        <div className="text-white">BSE midcap</div>
        <div className="text-[#6ccb5f]">+1.02%</div>
      </div>
      <svg width="29" height="29" viewBox="0 0 29 29">
        <defs>
          <linearGradient id="win" gradientUnits="userSpaceOnUse" x1="0" y1="0" x2="29" y2="29"><stop offset="0" stopColor="#88e0ff" /><stop offset="1" stopColor="#0890f8" /></linearGradient>
        </defs>
        <path d="M0 1q0-1 1-1h13v14H0zM15 0h13q1 0 1 1v13H15zM0 15h14v14H1q-1 0-1-1zM15 15h14v13q0 1-1 1H15z" fill="url(#win)" />
      </svg>
      <div className="ml-[18px] flex h-[38px] w-[273px] items-center rounded-full bg-[#f2f2f2] pl-[14px] pr-[9px]">
        <svg width="19" height="19" viewBox="0 0 19 19" fill="none" stroke="#2a2a2a" strokeWidth="2"><circle cx="8.500" cy="8" r="6.800" /><path d="M13 13l5 5" /></svg>
        <span className="ml-[12px] mt-[2px] text-[16px] text-[#5c5c5c]">Search</span>
        <svg width="54" height="26" viewBox="0 0 57 26" className="ml-auto">
          <path d="M2 2l5 3-1 2 4 3M0 13h5l2-2 3 2M4 24l3-4h2l2-3M55 2l-5 3 1 2-4 3M57 13h-5l-2-2-3 2M53 24l-3-4h-2l-2-3" stroke="#f0c010" strokeWidth="1.600" fill="none" />
          <rect x="11" y="1" width="36" height="23" rx="3" fill="#b88020" />
          <rect x="13" y="3" width="32" height="16" rx="1" fill="#f2d890" />
          <path d="M15 6h18M15 9h18M15 12h18" stroke="#dcb860" /><path d="M35 6h7M35 9h7M35 12h7" stroke="#a07020" />
          <rect x="14" y="14" width="30" height="6" fill="#b89048" />
          <circle cx="18" cy="17" r="2.500" fill="#6a4010" /><circle cx="40" cy="17" r="2.500" fill="#6a4010" />
          <path d="M15 25h4M39 25h4" stroke="#704810" strokeWidth="2" />
        </svg>
      </div>
      <div className="ml-[3px] flex">
        <TaskApps />
      </div>
      <Tray />
    </div>
  );
}

export default function App() {
  return (
    <div className="flex h-[1078px] w-[1918px] flex-col overflow-hidden whitespace-nowrap bg-[#f0f0f0] font-['Noto_Sans',sans-serif]">
      <HostTitle />
      <GnomePanel />
      <div className="flex h-[898px]">
        <Dock />
        <MagicWindow />
      </div>
      <div className="flex h-8 items-center justify-end bg-[#f0f0f0] pt-[8px]">
        <StatusIcons />
        <span className="ml-[2px] text-[15px] tracking-[-0.4px] text-black">Right Ctrl</span>
      </div>
      <Taskbar />
    </div>
  );
}
